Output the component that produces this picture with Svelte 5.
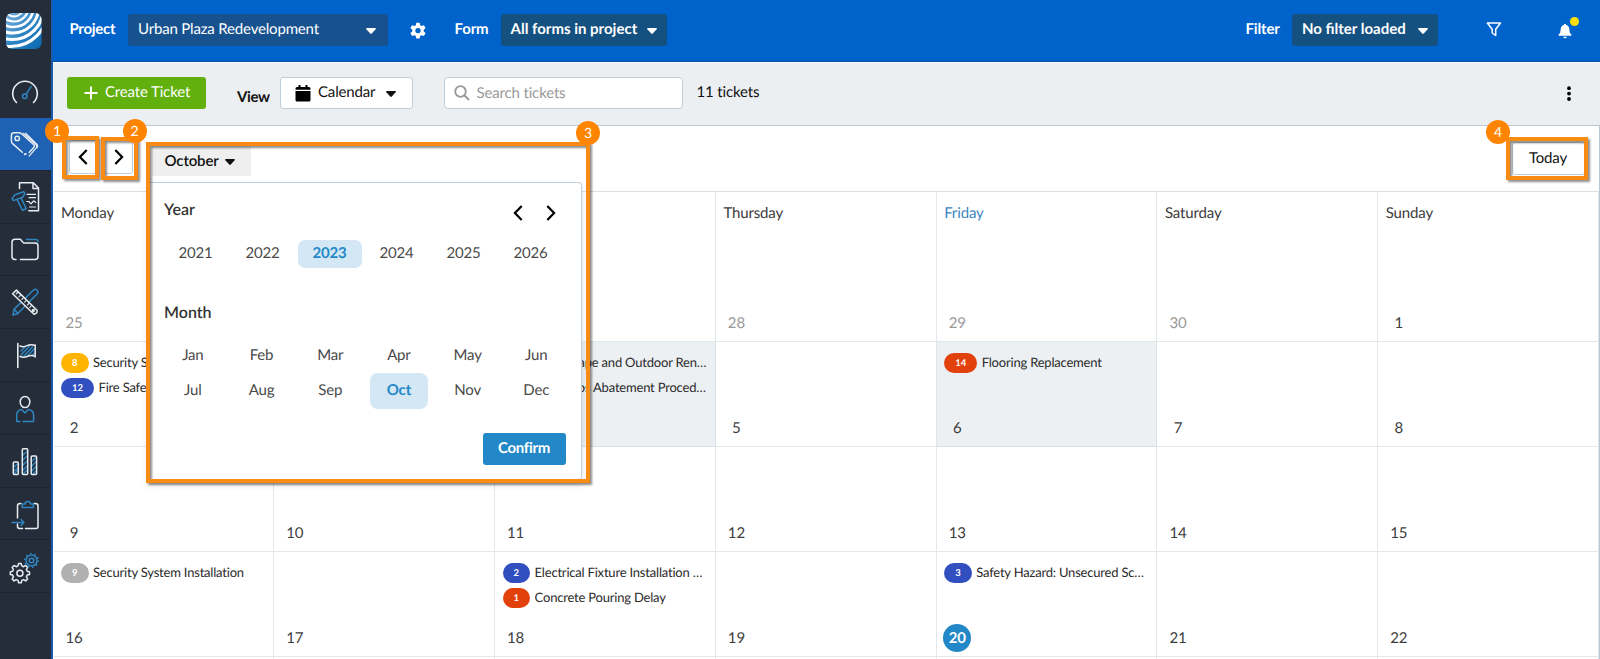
<script lang="ts">
	const years = [2021, 2022, 2023, 2024, 2025, 2026];
	const months = ["Jan", "Feb", "Mar", "Apr", "May", "Jun", "Jul", "Aug", "Sep", "Oct", "Nov", "Dec"];
	const dayNames = ["Monday", "Tuesday", "Wednesday", "Thursday", "Friday", "Saturday", "Sunday"];

	let year = $state(2023);
	let month = $state("Oct");
	let search = $state("");

	type Ticket = { id: number; title: string; color: string };

	const tickets: Record<string, Ticket[]> = {
		"1-0": [
			{ id: 8, title: "Security System Inspection", color: "amber" },
			{ id: 12, title: "Fire Safety Equipment", color: "blue" }
		],
		"1-2": [
			{ id: 10, title: "Landscape and Outdoor Renovation", color: "blue" },
			{ id: 11, title: "Asbestos Abatement Procedures", color: "red" }
		],
		"1-4": [{ id: 14, title: "Flooring Replacement", color: "red" }],
		"3-0": [{ id: 9, title: "Security System Installation", color: "gray" }],
		"3-2": [
			{ id: 2, title: "Electrical Fixture Installation Mismatch", color: "blue" },
			{ id: 1, title: "Concrete Pouring Delay", color: "red" }
		],
		"3-4": [{ id: 3, title: "Safety Hazard: Unsecured Scaffolding", color: "blue" }]
	};

	const weeks = [
		[25, 26, 27, 28, 29, 30, 1],
		[2, 3, 4, 5, 6, 7, 8],
		[9, 10, 11, 12, 13, 14, 15],
		[16, 17, 18, 19, 20, 21, 22],
		[23, 24, 25, 26, 27, 28, 29]
	];

	const shaded = ["1-2", "1-4"];

	const menu = ["tickets", "reports", "files", "plans", "milestones", "contacts", "statistics", "export", "settings"];
</script>

{#snippet caret()}
	<svg class="caret" width="10" height="6" viewBox="0 0 10 6"><path d="M.7 0h8.6q1 .4.3 1.2L5.8 5.4q-.8.8-1.6 0L.4 1.2Q-.3.4.7 0z" fill="currentColor" /></svg>
{/snippet}

{#snippet chevron(dir: string)}
	<svg width="10" height="16" viewBox="0 0 10 16">
		<path d={dir === "left" ? "M8.7 1 1.9 8l6.8 7" : "M1.3 1l6.8 7-6.8 7"} fill="none" stroke="#000" stroke-width="2.2" />
	</svg>
{/snippet}

{#snippet menuIcon(name: string)}
	<svg class="line" width="50" height="52" viewBox="0 0 50 52">
		{#if name === "tickets"}
			<path d="M22.300 34.300 12.600 25.600q-1.200-1-1.200-2.600v-5.600q0-2.600 2.600-2.600h4.900q1.600 0 2.700 1l12 10.600q1.600 1.500.1 3.100l-4.500 5M24.500 36l.8.500.8-.6" />
			<path d="M23.200 15.300 35.900 26.400q1.800 1.700.2 3.700l-7 8M25.600 15.200 37.300 26.800q1 1.300-.2 2.700" stroke-width="1.200" />
			<circle cx="17.200" cy="20.400" r="2.200" />
		{:else if name === "reports"}
			<path d="M19.500 17.500v-5.700h13.800l5.200 5.300v22.700H28.800M33 12v5.400h5.300" />
			<path d="M27 23.300h8.500M29 26.600h6.500M26.800 30.500h2l2.200 2.400 2.600-3.100 2.200 1.700M29.500 36h6" stroke-width="1.200" />
			<path class="accent" d="m12 27.600 3-3.800 8.700-3 1.300 1.700-2.500 3.800-9.200 3.300zM17.300 28.800l5.200 10.500 3.700-1.600-4.800-10.300" />
		{:else if name === "files"}
			<path transform="translate(0 -3.500)" d="M16 39h-1q-3 0-3-3V21.700q0-3 3-3h5.400l3 3.700h11.600q3 0 3 3V36q0 3-3 3H20.500" />
			<path transform="translate(0 -3.500)" class="accent" d="M26.500 19h9.500q2 0 2 2.500" />
		{:else if name === "plans"}
			<path class="accent" d="m13 39 1-5.600L33.500 14q2-1.400 3.700.2 1.500 1.800 0 3.600L17.500 37.700zM14.500 33.500l3.500 4" />
			<path class="cover" d="m12.600 17.800 3.800-3.700L37 34.300q.8 3-3 3.900z" />
			<path d="m12.600 17.800 3.800-3.700L37 34.300q.8 3-3 3.900z" />
			<path d="M17.500 16.500l-1.300 1.300M20.300 19.300l-1.300 1.300M23.100 22.100l-1.300 1.300M25.900 24.900l-1.300 1.300M28.700 27.700l-1.300 1.300M31 30.200l-1.200 1.200" stroke-width="1.100" />
			<circle cx="33.300" cy="34.500" r=".9" />
		{:else if name === "milestones"}
			<path d="M17.800 14.500v24" stroke-width="1.600" />
			<path class="accent" d="m21 26 8.500-9M24 27l8.500-9M21 22l4-4M28 26.500l6.500-6.800M32 26.500l2.500-2.500" />
			<path d="M20 17q3.500 1.500 7-.3 3.800-2 8.200-.2v11q-3.700-2-7.500-.2t-7.700.2M35.200 16v12" />
		{:else if name === "contacts"}
			<ellipse cx="25" cy="20" rx="4.800" ry="5.600" />
			<path class="accent" d="M20 39.500h-3.300V33q0-5 5-5.600l3.200 3.500 3.400-3.500q5.300.600 5.300 5.600v6.500H23" />
		{:else if name === "statistics"}
			<path class="accent" d="m14 32 3.500-3M14 36l3.500-3M14 39l4-4M23 20l4-3.500M23 25l4-4M23 30l4-4M23 35l4-4M23 39l4-4M32 26l3.500-3M32 31l3.500-4M32 36l3.500-4M33 39l3-3" />
			<rect x="13.300" y="27" width="5" height="12.500" rx="1" />
			<rect x="22.300" y="13.800" width="5.400" height="25.700" rx="1" />
			<rect x="31.200" y="21" width="5.400" height="18.500" rx="1" />
		{:else if name === "export"}
			<path d="M21 15.500h-1q-2.500 0-2.500 2.500v12M17.500 36v2.500q0 1.900 2 1.900h3M25.500 40.400H36q2 0 2-2V18q0-2.500-2.500-2.500H34" />
			<path class="accent" d="M22.200 19.500V16h2.900q0-2.500 2.700-2.500t2.700 2.500h2.900v3.500zM12 34.500h12M21 31.500l3 3-3 3" />
		{:else}
			<g transform="translate(0 -1.500)">
				<path d="m18.600 25.100 2.600 0 .6 2.300 1.700.8 2.200-1.200 1.900 1.800-1.200 2.200.8 1.800 2.300.6v2.600l-2.300.6-.8 1.800 1.200 2.100-1.900 1.900-2.100-1.300-1.800.8-.6 2.300h-2.600l-.6-2.300-1.800-.8-2.100 1.300-1.900-1.900 1.200-2.100-.8-1.800-2.300-.6v-2.600l2.300-.6.8-1.800-1.200-2.200 1.900-1.800 2.200 1.200 1.700-.8z" />
				<circle cx="19.900" cy="34.700" r="3" />
				<circle class="accent" cx="31.500" cy="22" r="5.500" />
				<circle class="accent" cx="31.500" cy="22" r="6.800" stroke-dasharray="1.300 3.040" stroke-width="1.700" stroke-linecap="butt" />
				<circle class="accent" cx="31.500" cy="22" r="2.300" />
			</g>
		{/if}
	</svg>
{/snippet}

<div class="app">
	<nav class="sidebar">
		<div class="logo">
			<svg width="36" height="36" viewBox="0 0 36 36">
				<defs>
					<linearGradient id="sky" x1="0" y1="0" x2="1" y2="1">
						<stop offset="0" stop-color="#7eb3dd" />
						<stop offset=".5" stop-color="#2c84c4" />
						<stop offset="1" stop-color="#0867ad" />
					</linearGradient>
					<clipPath id="tile"><rect width="35.500" height="36" rx="6" /></clipPath>
				</defs>
				<g clip-path="url(#tile)">
					<rect width="36" height="36" fill="url(#sky)" />
					<g fill="none" stroke="#fff">
						<circle cx="8" cy="-6" r="9.500" stroke-width="1.800" />
						<circle cx="8" cy="-6" r="14.500" stroke-width="2.200" />
						<circle cx="7.500" cy="-6" r="20" stroke-width="2.700" />
						<circle cx="7" cy="-5.500" r="25.500" stroke-width="3" />
						<circle cx="6" cy="-5" r="31.500" stroke-width="3.200" />
						<circle cx="4.500" cy="-4" r="37.500" stroke-width="3.200" />
					</g>
				</g>
			</svg>
		</div>
		<div class="dash">
			<svg class="line" width="50" height="55" viewBox="0 0 50 55">
				<path d="M16.500 40.500a12.300 12.300 0 1 1 17 0" stroke-width="1.600" />
				<circle class="accent" cx="24.800" cy="34.300" r="2.300" />
				<path class="accent" d="m26.200 32.200 4.800-7.500" />
			</svg>
		</div>
		{#each menu as item, i}
			<div class="menu-item" class:active={i === 0}>{@render menuIcon(item)}</div>
		{/each}
	</nav>

	<main>
		<header>
			<span class="label project">Project</span>
			<button class="select wide">Urban Plaza Redevelopment {@render caret()}</button>
			<svg class="gear" width="18" height="18" viewBox="0 0 18 18">
				<path fill="#fff" fill-rule="evenodd" d="M7.300.800h3.400l.5 2.400 1.300.8 2.400-.8 1.700 2.900-1.900 1.700v1.600l1.900 1.700-1.700 2.900-2.400-.8-1.300.8-.5 2.400H7.300l-.5-2.400-1.300-.8-2.400.8-1.700-2.900 1.900-1.700V7.800L1.400 6.100l1.700-2.900 2.400.8 1.300-.8zM9 5.900a2.700 2.700 0 1 0 0 5.400 2.700 2.700 0 0 0 0-5.400z" />
			</svg>
			<span class="label form">Form</span>
			<button class="select forms">All forms in project {@render caret()}</button>
			<span class="label filter">Filter</span>
			<button class="select loaded">No filter loaded {@render caret()}</button>
			<svg class="funnel" width="16" height="15" viewBox="0 0 16 15">
				<path d="M1.300 1h13.200L9.700 7.300v6.200L6.200 11V7.300z" fill="none" stroke="#fff" stroke-width="1.500" stroke-linejoin="round" />
			</svg>
			<div class="bell">
				<svg width="14" height="16" viewBox="0 0 14 16">
					<path d="M7 .8q.9 0 .9 1Q11.300 2.600 11.400 7q0 3.400 2 4.600.6 1-.4 1.100H1Q0 12.600.6 11.600q2-1.200 2-4.600.1-4.400 3.500-5.200 0-1 .9-1zM5.100 13.700h3.800Q8.500 15.300 7 15.300t-1.900-1.600z" fill="#fff" />
				</svg>
				<i></i>
			</div>
		</header>

		<div class="toolbar">
			<button class="create">
				<svg width="14" height="14" viewBox="0 0 14 14"><path d="M7 .5v13M.5 7h13" stroke="#fff" stroke-width="1.900" /></svg>
				<span>Create Ticket</span>
			</button>
			<span class="view-label">View</span>
			<button class="view">
				<svg width="16" height="17" viewBox="0 0 16 17">
					<path d="M3.500 0h2v2h5V0h2v2H14q1.500 0 1.500 1.500v1.300H.5V3.500Q.5 2 2 2h1.500zM.5 6h15v9q0 1.500-1.500 1.500H2Q.5 16.500.5 15z" />
				</svg>
				<span>Calendar</span>
				{@render caret()}
			</button>
			<label class="search">
				<svg width="16" height="16" viewBox="0 0 16 16"><circle cx="6.500" cy="6.500" r="5.300" fill="none" stroke="#999" stroke-width="1.800" /><path d="m10.500 10.500 4.600 4.600" stroke="#999" stroke-width="2" /></svg>
				<input bind:value={search} placeholder="Search tickets" />
			</label>
			<span class="count">11 tickets</span>
			<svg class="more" width="4" height="16" viewBox="0 0 4 16"><circle cx="2" cy="2.200" r="1.900" /><circle cx="2" cy="7.600" r="1.900" /><circle cx="2" cy="13" r="1.900" /></svg>
		</div>

		<section class="calendar">
			<div class="cal-bar">
				<button class="step">{@render chevron("left")}</button>
				<button class="step">{@render chevron("right")}</button>
				<div class="picker-anchor">
					<button class="month-btn">October {@render caret()}</button>
					<div class="picker">
						<div class="picker-head">
							<h3>Year</h3>
							<div class="arrows">{@render chevron("left")}{@render chevron("right")}</div>
						</div>
						<div class="years">
							{#each years as y}
								<button class:selected={y === year} onclick={() => (year = y)}>{y}</button>
							{/each}
						</div>
						<h3>Month</h3>
						<div class="months">
							{#each months as m}
								<button class:selected={m === month} onclick={() => (month = m)}>{m}</button>
							{/each}
						</div>
						<button class="confirm">Confirm</button>
					</div>
				</div>
				<button class="today-btn">Today</button>
			</div>

			<div class="grid">
				{#each weeks as week, w}
					{#each week as day, d}
						<div class="cell" class:shaded={shaded.includes(`${w}-${d}`)}>
							{#if w === 0}
								<div class="day-name" class:current={d === 4}>{dayNames[d]}</div>
							{/if}
							{#each tickets[`${w}-${d}`] ?? [] as t}
								<div class="ticket">
									<span class="pill {t.color}">{t.id}</span>
									<span class="title">{t.title}</span>
								</div>
							{/each}
							<span class="num" class:muted={w === 0 && day > 20} class:today={w === 3 && d === 4}>{day}</span>
						</div>
					{/each}
				{/each}
			</div>
		</section>
	</main>

	<!-- numbered callouts -->
	<div class="frame f1"></div>
	<div class="frame f2"></div>
	<div class="frame f3"></div>
	<div class="frame f4"></div>
	<span class="badge b1">1</span>
	<span class="badge b2">2</span>
	<span class="badge b3">3</span>
	<span class="badge b4">4</span>
</div>

<style>
	:global(body) {
		overflow: hidden;
	}

	.app {
		position: relative;
		display: flex;
		width: 1600px;
		height: 659px;
		overflow: hidden;
		font-family: Lato, sans-serif;
		font-size: 15px;
		letter-spacing: -0.15px;
		text-rendering: geometricPrecision;
		color: #3c3c3c;
		background: #fff;
	}

	.app * {
		box-sizing: border-box;
	}

	button {
		font: inherit;
		color: inherit;
		border: none;
		background: none;
		padding: 0;
		white-space: nowrap;
		letter-spacing: inherit;
		text-rendering: inherit;
	}

	svg {
		display: block;
		flex: none;
	}

	/* sidebar */
	.sidebar {
		flex: none;
		width: 52.5px;
		background: #262d3a;
		border-right: 2.5px solid #1a5cab;
	}

	.logo {
		height: 62px;
		padding: 13px 0 0 6px;
	}

	.dash {
		height: 56px;
	}

	.menu-item {
		height: 52.8px;
		border-bottom: 1px solid #1e2531;
	}

	.menu-item.active {
		background: #1f62b3;
	}

	.line {
		fill: none;
		stroke: #e8edf2;
		stroke-width: 1.5;
		stroke-linecap: round;
		stroke-linejoin: round;
	}

	.line .accent {
		stroke: #2e86c1;
	}

	.line .cover {
		fill: #262d3a;
		stroke: none;
	}

	main {
		flex: 1;
		min-width: 0;
		display: flex;
		flex-direction: column;
	}

	/* header */
	header {
		flex: none;
		display: flex;
		height: 62px;
		padding: 14px 18px 0 17px;
		background: #0063cc;
		border-bottom: 1px solid #0a50a4;
		color: #fff;
	}

	.label {
		font-weight: 700;
		line-height: 30px;
	}

	.project {
		width: 58px;
		letter-spacing: -0.3px;
	}

	.select {
		display: flex;
		align-items: center;
		justify-content: space-between;
		height: 31.5px;
		padding: 0 12px 2px 10px;
		border-radius: 3px;
		background: #155180;
		font-weight: 700;
		letter-spacing: 0;
	}

	.select .caret {
		margin-top: 3.5px;
	}

	.select.wide {
		width: 260.5px;
		padding: 0 12px 1px 10.5px;
		background: #17528f;
		font-weight: 400;
		letter-spacing: -0.17px;
	}

	.gear {
		margin: 8px 0 0 21px;
	}

	.form {
		width: 46px;
		margin-left: 27.500px;
	}

	.forms {
		width: 166px;
		padding-right: 10px;
	}

	.filter {
		width: 46.500px;
		margin-left: auto;
	}

	.loaded {
		width: 146px;
		padding-right: 10px;
	}

	.funnel {
		margin: 8px 0 0 48px;
	}

	.bell {
		position: relative;
		width: 24px;
		margin: 9px 0 0 56px;
	}

	.bell i {
		position: absolute;
		top: -6.500px;
		left: 11.500px;
		width: 9.500px;
		height: 9.500px;
		border-radius: 50%;
		background: #ffe00a;
	}

	/* toolbar */
	.toolbar {
		flex: none;
		display: flex;
		height: 63px;
		padding: 14px 29px 0 14.500px;
		background: #ebeff2;
		border-top: 1px solid #fff;
		color: #111;
	}

	.create {
		display: flex;
		align-items: center;
		gap: 7.500px;
		width: 139px;
		height: 32px;
		padding-left: 16.500px;
		border-radius: 3px;
		background: #61b00d;
		color: #fff;
	}

	.create span,
	.view span {
		padding-bottom: 2px;
	}

	.view-label {
		width: 43px;
		margin: 9px 0 0 31px;
		font-weight: 700;
		line-height: 22px;
		letter-spacing: -0.4px;
	}

	.view {
		display: flex;
		align-items: center;
		width: 133px;
		height: 32px;
		padding: 0 16px 0 14px;
		border: 1px solid #c1cdd8;
		border-radius: 3px;
		background: #fff;
	}

	.view svg:first-child {
		margin-right: 7px;
	}

	.view .caret {
		margin: 2px 0 0 auto;
	}

	.search {
		display: flex;
		align-items: center;
		gap: 7px;
		width: 239px;
		height: 32px;
		margin-left: 31px;
		padding: 0 9px 0 8.500px;
		border: 1px solid #c1cdd8;
		border-radius: 4px;
		background: #fff;
	}

	.search input {
		width: 180px;
		border: none;
		outline: none;
		padding: 0 0 1px;
		font: inherit;
		letter-spacing: inherit;
		text-rendering: inherit;
	}

	.search input::placeholder {
		color: #999;
	}

	.count {
		margin-left: 13.500px;
		line-height: 31px;
	}

	.more {
		margin: 9px 0 0 auto;
	}

	/* calendar */
	.calendar {
		flex: none;
		width: 1547px;
		padding-left: 1px;
		border-top: 1px solid #b9c7d3;
		border-right: 1px solid #b9c7d3;
	}

	.cal-bar {
		display: flex;
		height: 66px;
		padding: 14px 14px 0 15px;
		border-bottom: 1.500px solid #d8e0e5;
		color: #111;
	}

	.step {
		display: flex;
		align-items: center;
		justify-content: center;
		width: 29px;
		height: 34px;
		margin-right: 6.500px;
		border: 1px solid #c1cdd8;
		border-radius: 3px;
	}

	.picker-anchor {
		position: relative;
		margin: 6px 0 0 12px;
	}

	.month-btn {
		display: flex;
		align-items: center;
		gap: 6.500px;
		width: 99.500px;
		height: 30px;
		padding: 0 0 1px 13px;
		background: #efefef;
		font-weight: 600;
	}

	.month-btn .caret {
		margin-top: 2px;
	}

	.picker {
		position: absolute;
		top: 36px;
		left: -4px;
		z-index: 2;
		width: 434px;
		height: 298px;
		padding: 17px 15px 0 16.500px;
		border: 1px solid #c3d0d9;
		border-left: none;
		border-radius: 0 4px 4px 0;
		background: #fff;
		box-shadow: 0 4px 8px rgba(0, 0, 0, 0.12);
		color: #4a4a4a;
	}

	.picker-head {
		display: flex;
		justify-content: space-between;
		margin-bottom: 19px;
	}

	.picker h3 {
		margin: 0;
		font-size: 16px;
		font-weight: 600;
		line-height: 20px;
		color: #333;
		letter-spacing: 0;
	}

	.arrows {
		display: flex;
		gap: 23px;
		margin: 5px 10px 0 0;
	}

	.years {
		display: grid;
		grid-template-columns: repeat(6, 67px);
		justify-items: center;
		margin: 0 0 35px -2px;
	}

	.years button {
		width: 64px;
		height: 28px;
		padding-bottom: 3px;
		border-radius: 7px;
	}

	.months {
		display: grid;
		grid-template-columns: repeat(6, 68.700px);
		grid-auto-rows: 35px;
		justify-items: center;
		margin: 15px 0 0 -5.500px;
	}

	.months button {
		width: 58px;
		height: 36px;
		padding-bottom: 2px;
		border-radius: 8px;
	}

	.picker .selected {
		background: #d3e7f4;
		color: #2388c7;
		font-weight: 700;
	}

	.confirm {
		display: block;
		width: 83px;
		height: 32px;
		margin: 25px 0 0 auto;
		padding-bottom: 2px;
		border-radius: 3px;
		background: #2388c7;
		color: #fff;
		font-weight: 700;
		letter-spacing: -0.3px;
	}

	.today-btn {
		width: 73px;
		height: 33px;
		margin: 2px 0 0 auto;
		padding-bottom: 2px;
		border: 1px solid #c1cdd8;
		border-radius: 3px;
	}

	.grid {
		display: grid;
		grid-template-columns: repeat(7, 220.800px);
		grid-template-rows: 149.500px repeat(4, 105px);
		height: 467px;
		overflow: hidden;
	}

	.cell {
		display: flex;
		flex-direction: column;
		padding: 11.500px 8px 4px 7.500px;
		border-right: 1px solid #e2e7ea;
		border-bottom: 1px solid #e2e7ea;
		min-width: 0;
	}

	.cell.shaded {
		background: #ecf0f3;
		border-color: #d8e0e5;
	}

	.day-name {
		line-height: 18px;
	}

	.day-name.current {
		color: #3b86c3;
	}

	.ticket {
		display: flex;
		gap: 4.500px;
		height: 20px;
		margin-bottom: 5px;
		font-size: 13px;
		line-height: 18px;
		letter-spacing: -0.2px;
		color: #2b2b2b;
	}

	.pill {
		flex: none;
		padding: 0 11px;
		border-radius: 10px;
		font-size: 9.500px;
		font-weight: 700;
		line-height: 21px;
		letter-spacing: 0;
		color: #fff;
	}

	.amber {
		background: #ffb400;
	}

	.blue {
		background: #324fc0;
	}

	.red {
		background: #e2410b;
	}

	.gray {
		background: #b0b0b0;
	}

	.title {
		overflow: hidden;
		text-overflow: ellipsis;
		white-space: nowrap;
	}

	.num {
		width: 28px;
		height: 28px;
		margin: auto 0 0 -1px;
		border-radius: 50%;
		line-height: 29px;
		text-align: center;
	}

	.num.muted {
		color: #999;
	}

	.num.today {
		background: #2388c7;
		color: #fff;
		font-weight: 700;
	}

	/* callouts */
	.frame {
		position: absolute;
		z-index: 3;
		border: 4px solid #f78b14;
		filter: drop-shadow(2px 2px 1px rgba(0, 0, 0, 0.45));
	}

	.f1 {
		top: 136px;
		left: 62px;
		width: 37px;
		height: 43px;
	}

	.f2 {
		top: 137px;
		left: 101px;
		width: 37px;
		height: 43px;
	}

	.f3 {
		top: 142px;
		left: 146px;
		width: 444px;
		height: 341px;
	}

	.f4 {
		top: 137px;
		left: 1506px;
		width: 82px;
		height: 43px;
	}

	.badge {
		position: absolute;
		z-index: 4;
		width: 24px;
		height: 24px;
		border-radius: 50%;
		background: #ff8400;
		color: #fff;
		font-size: 14px;
		line-height: 24px;
		text-align: center;
	}

	.b1 {
		top: 119px;
		left: 45px;
	}

	.b2 {
		top: 119px;
		left: 122.500px;
	}

	.b3 {
		top: 120.500px;
		left: 576px;
	}

	.b4 {
		top: 120px;
		left: 1486px;
	}
</style>
